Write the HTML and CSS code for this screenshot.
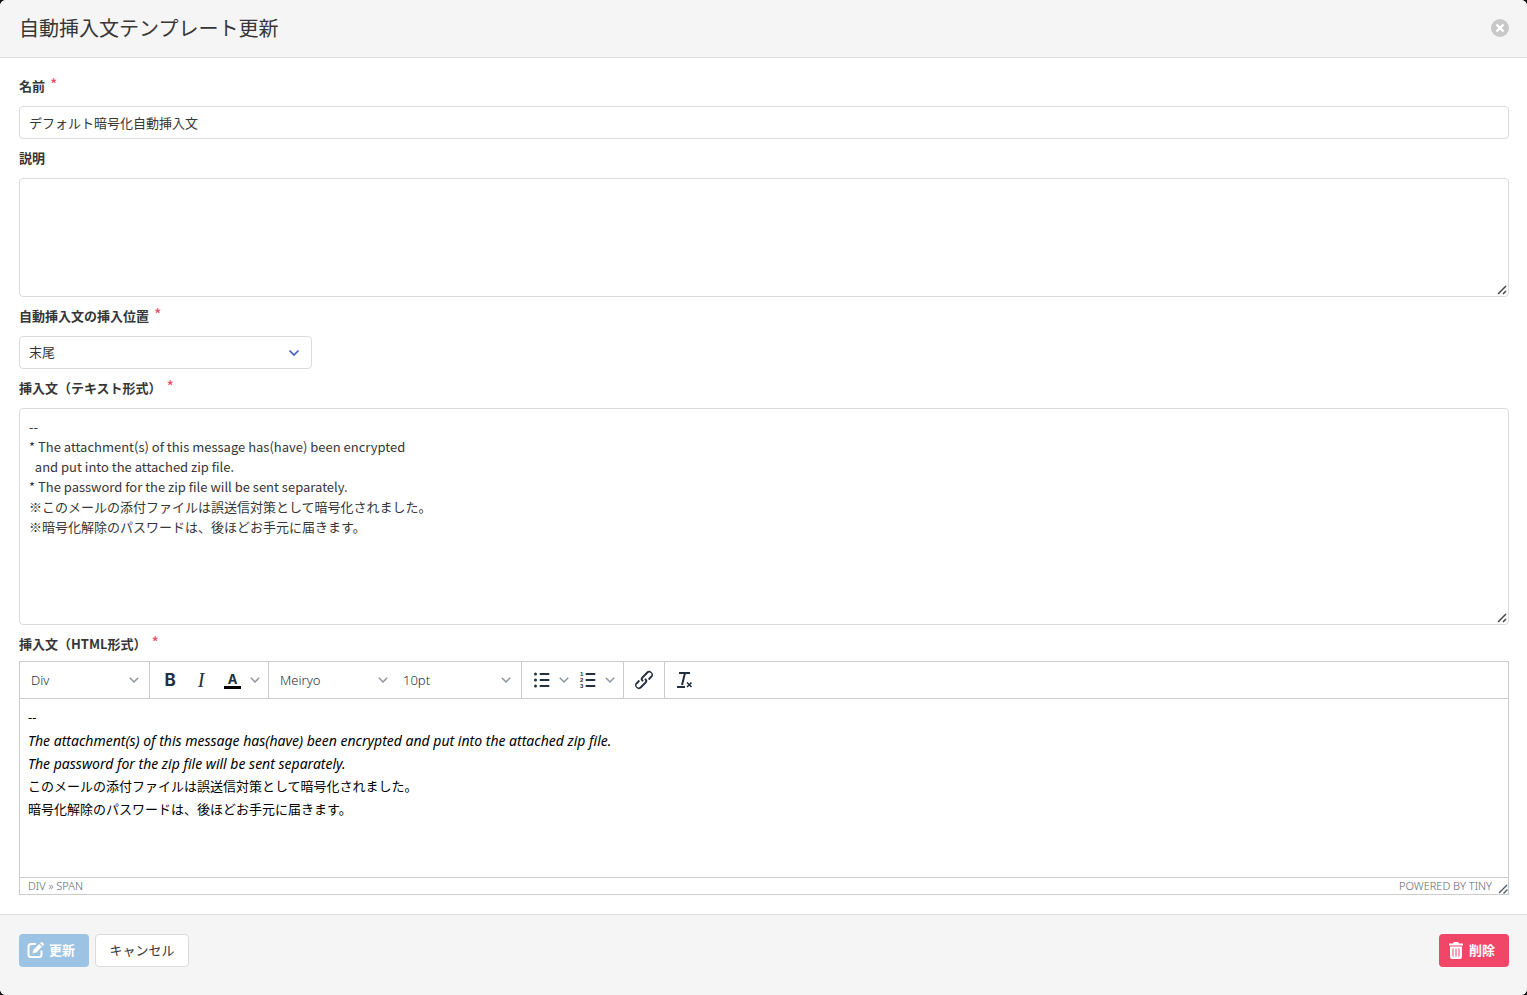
FILE: index.html
```
<!DOCTYPE html>
<html lang="ja">
<head>
    <meta charset="UTF-8">
    <meta name="viewport" content="width=device-width, initial-scale=1.0">
    <title>自動挿入文テンプレート更新</title>
    <link rel="stylesheet" href="styles.css">
</head>
<body>

    <form class="modal">
        <header class="modal-head">
            <h1>自動挿入文テンプレート更新</h1>
            <button type="button" class="close" aria-label="閉じる">
                <svg width="10" height="10" viewBox="0 0 10 10"><path d="M1.500 1.500l7 7M8.500 1.500l-7 7" stroke="#fff" stroke-width="2.4"/></svg>
            </button>
        </header>

        <main class="modal-body">
            <div class="field">
                <label for="name">名前 <span class="required">*</span></label>
                <input type="text" id="name" class="control" value="デフォルト暗号化自動挿入文">
            </div>

            <div class="field">
                <label for="description">説明</label>
                <div class="resizable">
                    <textarea id="description" class="control description"></textarea>
                    <svg width="10" height="10" viewBox="0 0 10 10"><path d="M1 9l8-8M6 9l3-3" stroke="#444" stroke-width="1.500"/></svg>
                </div>
            </div>

            <div class="field">
                <label for="position">自動挿入文の挿入位置 <span class="required">*</span></label>
                <div class="select">
                    <select id="position" class="control">
                        <option>末尾</option>
                    </select>
                    <svg width="12" height="8" viewBox="0 0 12 8"><path d="M1.500 1.500L6 6l4.500-4.500" fill="none" stroke="#485fc7" stroke-width="1.700"/></svg>
                </div>
            </div>

            <div class="field">
                <label for="text">挿入文（テキスト形式） <span class="required">*</span></label>
                <div class="resizable">
                    <textarea id="text" class="control text">
--
* The attachment(s) of this message has(have) been encrypted
  and put into the attached zip file.
* The password for the zip file will be sent separately.
※このメールの添付ファイルは誤送信対策として暗号化されました。
※暗号化解除のパスワードは、後ほどお手元に届きます。</textarea>
                    <svg width="10" height="10" viewBox="0 0 10 10"><path d="M1 9l8-8M6 9l3-3" stroke="#444" stroke-width="1.500"/></svg>
                </div>
            </div>

            <div class="field field-editor">
                <label id="htmlLabel">挿入文（HTML形式） <span class="required">*</span></label>
                <div class="editor">
                    <div class="toolbar">
                        <div class="group">
                            <div class="tool-select">
                                <select aria-label="ブロック"><option>Div</option></select>
                                <svg class="chevron" viewBox="0 0 10 10"><path d="M.8 2.800L5 7l4.200-4.200"/></svg>
                            </div>
                        </div>
                        <div class="group">
                            <button type="button" class="tool bold" aria-label="太字">B</button>
                            <button type="button" class="tool italic" aria-label="斜体">I</button>
                            <div class="split">
                                <button type="button" class="tool color" aria-label="文字色">A</button>
                                <button type="button" class="arrow" aria-label="文字色を選択">
                                    <svg class="chevron" viewBox="0 0 10 10"><path d="M.8 2.800L5 7l4.200-4.200"/></svg>
                                </button>
                            </div>
                        </div>
                        <div class="group group-fonts">
                            <div class="tool-select">
                                <select aria-label="フォント"><option>Meiryo</option></select>
                                <svg class="chevron" viewBox="0 0 10 10"><path d="M.8 2.800L5 7l4.200-4.200"/></svg>
                            </div>
                            <div class="tool-select">
                                <select aria-label="文字サイズ"><option>10pt</option></select>
                                <svg class="chevron" viewBox="0 0 10 10"><path d="M.8 2.800L5 7l4.200-4.200"/></svg>
                            </div>
                        </div>
                        <div class="group">
                            <div class="split">
                                <button type="button" class="tool" aria-label="箇条書き">
                                    <svg width="24" height="24" viewBox="0 0 24 24">
                                        <path d="M10.500 6h8M10.500 12h8M10.500 18h8" stroke="#222f3e" stroke-width="2" stroke-linecap="round"/>
                                        <circle cx="5.500" cy="6" r="1.5"/><circle cx="5.500" cy="12" r="1.5"/><circle cx="5.500" cy="18" r="1.5"/>
                                    </svg>
                                </button>
                                <button type="button" class="arrow" aria-label="箇条書きの種類">
                                    <svg class="chevron" viewBox="0 0 10 10"><path d="M.8 2.800L5 7l4.200-4.200"/></svg>
                                </button>
                            </div>
                            <div class="split">
                                <button type="button" class="tool" aria-label="番号付きリスト">
                                    <svg width="24" height="24" viewBox="0 0 24 24">
                                        <path d="M10.500 6h8M10.500 12h8M10.500 18h8" stroke="#222f3e" stroke-width="2" stroke-linecap="round"/>
                                        <text x="4" y="8" class="digit">1</text>
                                        <text x="4" y="14" class="digit">2</text>
                                        <text x="4" y="20" class="digit">3</text>
                                    </svg>
                                </button>
                                <button type="button" class="arrow" aria-label="番号の種類">
                                    <svg class="chevron" viewBox="0 0 10 10"><path d="M.8 2.800L5 7l4.200-4.200"/></svg>
                                </button>
                            </div>
                        </div>
                        <div class="group">
                            <button type="button" class="tool" aria-label="リンク">
                                <svg width="24" height="24" viewBox="0 0 24 24"><path d="M6.200 12.300a1 1 0 0 1 1.400 1.400l-2 2a2 2 0 1 0 2.600 2.800l4.800-4.800a1 1 0 0 0 0-1.400 1 1 0 1 1 1.400-1.300 2.900 2.900 0 0 1 0 4L9.600 20a3.900 3.900 0 0 1-5.500-5.500l2-2Zm11.600-.6a1 1 0 0 1-1.400-1.400l2-2a2 2 0 1 0-2.600-2.800L11 10.300a1 1 0 0 0 0 1.400A1 1 0 1 1 9.600 13a2.900 2.900 0 0 1 0-4L14.400 4a3.900 3.900 0 0 1 5.500 5.500l-2 2Z"/></svg>
                            </button>
                        </div>
                        <div class="group group-last">
                            <button type="button" class="tool" aria-label="書式をクリア">
                                <svg width="24" height="24" viewBox="0 0 24 24" fill="none" stroke="#222f3e" stroke-width="2">
                                    <path d="M6 5h11M12 5L9 17M4 19h8"/>
                                    <path d="M14 14.500l4.500 4.500M18.500 14.500L14 19" stroke-width="1.600"/>
                                </svg>
                            </button>
                        </div>
                    </div>
                    <div class="content" contenteditable="true" role="textbox" aria-labelledby="htmlLabel" spellcheck="false">
                        <div>--</div>
                        <div class="latin"><em>The attachment(s) of this message has(have) been encrypted and put into the attached zip file.</em></div>
                        <div class="latin"><em>The password for the zip file will be sent separately.</em></div>
                        <div>このメールの添付ファイルは誤送信対策として暗号化されました。</div>
                        <div>暗号化解除のパスワードは、後ほどお手元に届きます。</div>
                    </div>
                    <div class="statusbar">
                        <span>DIV » SPAN</span>
                        <a href="#">POWERED BY TINY</a>
                        <svg width="10" height="10" viewBox="0 0 10 10"><path d="M1 9l8-8M5.500 9.500l4-4" stroke="#555f6b" stroke-width="1.400"/></svg>
                    </div>
                </div>
            </div>
        </main>

        <footer class="modal-foot">
            <button type="submit" class="btn update" disabled>
                <svg width="18" height="18" viewBox="0 0 18 18">
                    <path d="M9 3H4a2.500 2.500 0 0 0-2.500 2.500v8A2.500 2.500 0 0 0 4 16h8a2.500 2.500 0 0 0 2.500-2.500V9.500" fill="none" stroke="#fff" stroke-width="2"/>
                    <path d="M5.500 12.500l.8-3.600 5.900-5.900 2.800 2.800-5.900 5.900zM13 2.200l.8-.8a1.300 1.300 0 0 1 1.800 0l1 1a1.300 1.300 0 0 1 0 1.800l-.8.8z" fill="#fff"/>
                </svg>
                更新
            </button>
            <button type="button" class="btn cancel">キャンセル</button>
            <button type="button" class="btn delete">
                <svg width="14" height="17" viewBox="0 0 14 17">
                    <path d="M0 1.500h4L5 0h4l1 1.500h4v2H0z" fill="#fff"/>
                    <path d="M1 4.500h12V15a2 2 0 0 1-2 2H3a2 2 0 0 1-2-2z" fill="#fff"/>
                    <path d="M4 6.500v8M7 6.500v8M10 6.500v8" stroke="#f14668" stroke-width="1"/>
                </svg>
                削除
            </button>
        </footer>
    </form>

</body>
</html>
```
FILE: styles.css
```
* {
    box-sizing: border-box;
}
body {
    margin: 0;
    background-color: #111;
    color: #363636;
    font-family: "Noto Sans CJK JP", sans-serif;
    font-size: 13px;
    line-height: 20px;
}
button, input, select, textarea {
    font: inherit;
    color: inherit;
    margin: 0;
}
button {
    padding: 0;
    border: none;
    background: none;
    cursor: pointer;
}
.modal {
    display: flex;
    flex-direction: column;
    min-height: 100vh;
    border-radius: 6px;
    overflow: hidden;
    background-color: #fff;
}
.modal-head {
    display: flex;
    align-items: center;
    justify-content: space-between;
    height: 58px;
    padding: 0 18px 1px 19px;
    background-color: #f5f5f5;
    border-bottom: 1px solid #dbdbdb;
}
.modal-head h1 {
    margin: 0;
    font-size: 20px;
    font-weight: 400;
}
.close {
    display: flex;
    align-items: center;
    justify-content: center;
    width: 18px;
    height: 18px;
    border-radius: 50%;
    background-color: #c8c8c8;
}
.modal-body {
    flex: 1;
    display: flex;
    flex-direction: column;
    gap: 9px;
    padding: 18px 18px 19px 19px;
}

/* form fields */
.field {
    display: flex;
    flex-direction: column;
    gap: 10px;
}
.field-editor {
    gap: 7px;
}
.field label {
    font-weight: 700;
}
.required {
    margin-left: 2px;
    color: #f14668;
    font-size: 16px;
    font-weight: 400;
    line-height: 16px;
    vertical-align: top;
}
.control {
    display: block;
    width: 100%;
    height: 33px;
    padding: 0 9px 1px;
    border: 1px solid #dbdbdb;
    border-radius: 4px;
    background-color: #fff;
}
textarea.control {
    padding: 8px 9px;
    resize: vertical;
}
textarea::-webkit-resizer {
    background: none;
}
.resizable {
    position: relative;
}
.resizable svg {
    position: absolute;
    right: 2px;
    bottom: 2px;
    pointer-events: none;
}
textarea.description {
    height: 119px;
}
textarea.text {
    height: 217px;
}
.select {
    position: relative;
    width: 293px;
}
.select select,
.tool-select select {
    appearance: none;
}
.select svg {
    position: absolute;
    right: 12px;
    top: 13px;
    pointer-events: none;
}

/* editor */
.editor {
    border: 1px solid #ccc;
    font-family: "Noto Sans", "Noto Sans CJK JP", sans-serif;
}
.toolbar {
    display: flex;
    height: 37px;
    border-bottom: 1px solid #ccc;
    color: #222f3e;
}
.group {
    display: flex;
    align-items: center;
    gap: 3px;
    padding: 0 6px;
    border-right: 1px solid #ccc;
}
.group-fonts {
    gap: 6px;
}
.group-last {
    border-right: none;
}
.split {
    display: flex;
}
.tool-select {
    position: relative;
    width: 117px;
}
.tool-select select {
    display: block;
    width: 100%;
    height: 28px;
    padding: 0 5px;
    border: none;
    background: none;
    font-weight: 300;
}
.chevron {
    width: 10px;
    height: 10px;
    fill: none;
    stroke: #8d949c;
    stroke-width: 1.5;
}
.tool-select .chevron {
    position: absolute;
    right: 4px;
    top: 9px;
    pointer-events: none;
}
.tool, .arrow {
    display: flex;
    align-items: center;
    justify-content: center;
    width: 28px;
    height: 28px;
}
.tool svg {
    flex: none;
    fill: #222f3e;
}
.arrow {
    width: 15px;
}
.bold {
    font-family: Inter, sans-serif;
    font-size: 17px;
    font-weight: 700;
}
.italic {
    font-family: "Liberation Serif", serif;
    font-size: 20px;
    font-style: italic;
}
.color {
    flex-direction: column;
    width: 29px;
    font-family: Inter, sans-serif;
    font-size: 13px;
    font-weight: 700;
    line-height: 14px;
}
.color::after {
    content: "";
    width: 17px;
    height: 3px;
    background-color: #000;
}
.digit {
    font-family: "Liberation Sans", sans-serif;
    font-size: 6px;
    font-weight: 700;
}
.content {
    min-height: 178px;
    padding: 7px 8px;
    color: #000;
    font-size: 13px;
    line-height: 23px;
    outline: none;
}
.latin {
    font-size: 14px;
}
.statusbar {
    display: flex;
    align-items: center;
    height: 17px;
    padding-left: 8px;
    border-top: 1px solid #ccc;
    color: #5c6570;
    font-size: 11px;
    font-weight: 300;
    line-height: 16px;
}
.statusbar a {
    margin-left: auto;
    color: inherit;
    text-decoration: none;
}
.statusbar svg {
    align-self: flex-end;
    margin-left: 6px;
}

/* footer */
.modal-foot {
    display: flex;
    gap: 6px;
    height: 81px;
    padding: 19px 18px 0 19px;
    background-color: #f5f5f5;
    border-top: 1px solid #dbdbdb;
}
.btn {
    display: flex;
    align-items: center;
    justify-content: center;
    height: 33px;
    padding-bottom: 1px;
    border-radius: 4px;
}
.update {
    gap: 4px;
    width: 70px;
    padding-right: 6px;
    background-color: #9cc3e3;
    color: #fff;
    font-weight: 700;
    cursor: not-allowed;
}
.cancel {
    width: 94px;
    border: 1px solid #dbdbdb;
    background-color: #fff;
}
.delete {
    gap: 6px;
    width: 70px;
    margin-left: auto;
    padding-right: 4px;
    background-color: #f14668;
    color: #fff;
    font-weight: 700;
}
```
